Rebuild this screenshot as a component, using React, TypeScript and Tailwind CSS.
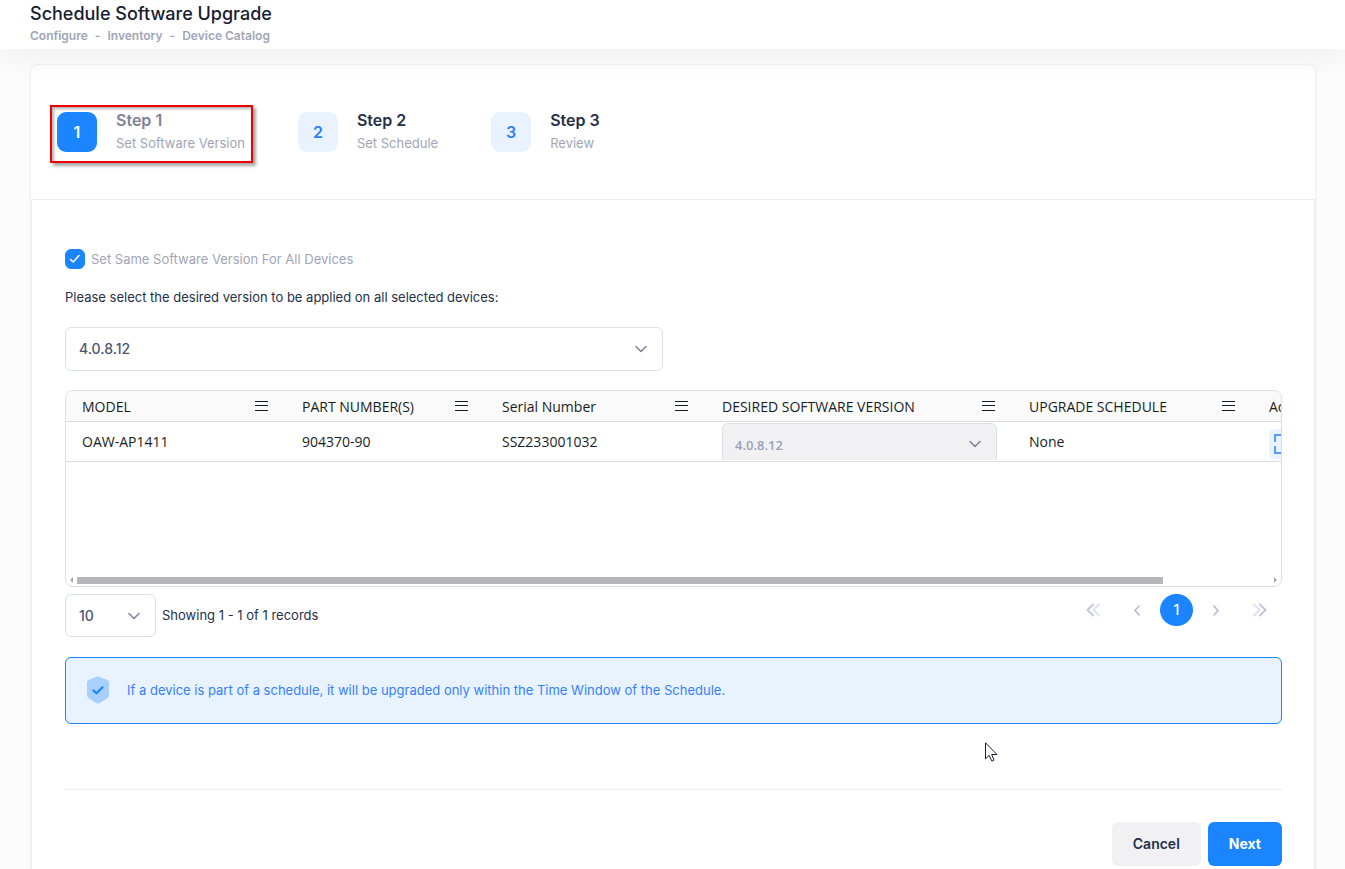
import { useState } from 'react';
import clsx from 'clsx';

const steps = [
    { number: 1, title: "Step 1", description: "Set Software Version" },
    { number: 2, title: "Step 2", description: "Set Schedule" },
    { number: 3, title: "Step 3", description: "Review" },
];

const columns = [
    { title: "MODEL", width: "w-[220px]" },
    { title: "PART NUMBER(S)", width: "w-[200px]" },
    { title: "Serial Number", width: "w-[220px]" },
    { title: "DESIRED SOFTWARE VERSION", width: "w-[307px]" },
    { title: "UPGRADE SCHEDULE", width: "w-[240px]" },
    { title: "Actions", width: "w-[116px]" },
];

const devices = [
    { model: "OAW-AP1411", part: "904370-90", serial: "SSZ233001032", version: "4.0.8.12", schedule: "None" },
];

const Chevron = ({ className }: { className?: string }) => (
    <svg viewBox="0 0 12 8" className={clsx("pointer-events-none h-2 w-3", className)} fill="none" stroke="#7e8299" strokeWidth="1.5" strokeLinecap="round" strokeLinejoin="round">
        <path d="M1 1.5l5 5 5-5" />
    </svg>
);

const MenuIcon = () => (
    <svg viewBox="0 0 13 10" className="h-2.5 w-[13px]" fill="none" stroke="#181d1f" strokeWidth="1" shapeRendering="crispEdges">
        <path d="M0 .5h13M0 4.5h13M0 9.5h13" />
    </svg>
);

const DoubleChevron = ({ flip }: { flip?: boolean }) => (
    <svg viewBox="0 0 14 14" className={clsx("h-3.5 w-3.5", flip && "rotate-180")} fill="none" stroke="#c1c6dc" strokeWidth="2" strokeLinejoin="round">
        <path d="M7.5 1L1.5 7l6 6" />
        <path d="M13.5 1l-6 6 6 6" opacity=".5" />
    </svg>
);

const SmallChevron = ({ flip }: { flip?: boolean }) => (
    <svg viewBox="0 0 6 11" className={clsx("h-[11px] w-1.5", flip && "rotate-180")} fill="none" stroke="#b5bad0" strokeWidth="1.6" strokeLinecap="round" strokeLinejoin="round">
        <path d="M5 1L1 5.500l4 4.500" />
    </svg>
);

const Stepper = () => (
    <ol className="flex h-[134px] gap-[53px] pt-[43px] pl-[26px]">
        {steps.map((step, index) => (
            <li key={step.number} className="relative flex h-12 items-center gap-[19px]">
                {index === 0 && (
                    <span className="absolute -top-[3px] -right-2 -bottom-[7px] -left-[7px] border-2 border-[#f00000] shadow-[3px_3px_3px_rgba(0,0,0,0.35),inset_2px_2px_3px_rgba(0,0,0,0.3)]" />
                )}
                <span className={clsx(
                    "flex h-10 w-10 items-center justify-center rounded-[9px] text-base font-semibold",
                    index === 0 ? "bg-[#1b84ff] text-white" : "bg-[#e9f3ff] text-[#2b7fff]"
                )}>
                    {step.number}
                </span>
                <div className="pb-0.5">
                    <h3 className={clsx("text-base leading-6 font-semibold", index === 0 ? "text-[#7e8299]" : "text-[#252f4a]")}>{step.title}</h3>
                    <p className="text-[13px] leading-[22px] text-[#a1a5b7]">{step.description}</p>
                </div>
            </li>
        ))}
    </ol>
);

const DeviceTable = () => (
    <div className="mt-[19px] flex h-[197px] flex-col overflow-hidden rounded-lg border border-[#dddddd]">
        <table className="w-[1303px] table-fixed border-collapse font-['Open_Sans','Noto_Sans',sans-serif] text-sm text-[#181d1f]">
            <thead>
                <tr className="h-[30px] border-b border-[#dddddd] bg-[#fafafa]">
                    {columns.map((column, index) => (
                        <th key={column.title} scope="col" className={clsx("p-0 pr-[18px] pl-4 text-left font-medium", column.width)}>
                            <div className="flex items-center justify-between whitespace-nowrap">
                                <span className="pt-0.5">{column.title}</span>
                                {index < 5 && <button type="button" aria-label="Column menu"><MenuIcon /></button>}
                            </div>
                        </th>
                    ))}
                </tr>
            </thead>
            <tbody>
                {devices.map((device) => (
                    <tr key={device.serial} className="h-10 border-b border-[#dddddd]">
                        <td className="p-0 pt-0.5 pl-4">{device.model}</td>
                        <td className="p-0 pt-0.5 pl-4">{device.part}</td>
                        <td className="p-0 pt-0.5 pl-4">{device.serial}</td>
                        <td className="p-0 px-4">
                            <div className="relative h-[38px] overflow-hidden pt-px">
                                <select disabled aria-label="Desired software version" className="h-11 w-full appearance-none rounded-md border border-[#dbdfe9] bg-[#f1f1f4] px-3 text-[13px] font-semibold text-[#99a1b7] opacity-100">
                                    <option>{device.version}</option>
                                </select>
                                <Chevron className="absolute top-[18px] right-4" />
                            </div>
                        </td>
                        <td className="p-0 pt-0.5 pl-4">{device.schedule}</td>
                        <td className="p-0 pt-0.5 pl-4">
                            <button type="button" aria-label="Expand" className="mt-1 flex h-[30px] w-[30px] items-center justify-center rounded-md bg-[#e9f3ff]">
                                <svg viewBox="0 0 20 20" className="h-5 w-5" fill="none" stroke="#2b7fff" strokeWidth="1.5">
                                    <path d="M8 1H1v7M12 1h7v7M8 19H1v-7M12 19h7v-7" />
                                </svg>
                            </button>
                        </td>
                    </tr>
                ))}
            </tbody>
        </table>
        <div className="mt-auto flex h-3 items-center gap-1 px-1">
            <svg viewBox="0 0 3 6" className="h-1.5 w-[3px]" fill="#a8a8b0"><path d="M3 0v6L0 3z" /></svg>
            <div className="flex-1">
                <div className="h-[7px] w-[91%] bg-[#b5b5ba]" />
            </div>
            <svg viewBox="0 0 3 6" className="h-1.5 w-[3px]" fill="#a8a8b0"><path d="M0 0v6l3-3z" /></svg>
        </div>
    </div>
);

const Pagination = () => (
    <div className="mt-[7px] flex items-start justify-between">
        <div className="flex items-center gap-1.5">
            <div className="relative">
                <select aria-label="Rows per page" className="h-[43px] w-[91px] appearance-none rounded-md border border-[#dbdfe9] bg-white px-[13px] text-sm font-medium text-[#4b5675]">
                    <option>10</option>
                    <option>25</option>
                </select>
                <Chevron className="absolute top-[18px] right-4" />
            </div>
            <span className="text-[13px] text-[#252f4a]">Showing 1 - 1 of 1 records</span>
        </div>
        <nav aria-label="Pages" className="flex items-center pr-[15px]">
            <button type="button" aria-label="First page"><DoubleChevron /></button>
            <button type="button" aria-label="Previous page" className="ml-[34px]"><SmallChevron /></button>
            <button type="button" className="mx-5 h-8 w-[33px] rounded-full bg-[#1b84ff] text-sm font-medium text-white">1</button>
            <button type="button" aria-label="Next page"><SmallChevron flip /></button>
            <button type="button" aria-label="Last page" className="ml-[34px]"><DoubleChevron flip /></button>
        </nav>
    </div>
);

const App = () => {
    const [sameVersion, setSameVersion] = useState(true);

    return (
        <div className="flex h-screen flex-col overflow-hidden bg-[#fcfcfc] font-['Inter',sans-serif]">
            <header className="relative z-10 flex h-[49px] shrink-0 flex-col justify-center bg-white px-[30px] pb-0.5 shadow-[0_10px_30px_rgba(0,0,0,0.05)]">
                <h1 className="text-lg leading-6 font-medium text-[#181c32]">Schedule Software Upgrade</h1>
                <nav className="flex gap-[7px] text-xs leading-5 font-semibold text-[#a1a5b7]">
                    <a href="#configure">Configure</a>
                    <span>-</span>
                    <a href="#inventory">Inventory</a>
                    <span>-</span>
                    <a href="#catalog">Device Catalog</a>
                </nav>
            </header>

            <main className="min-h-0 flex-1 overflow-hidden pt-[15px] pr-[29px] pl-[30px]">
                <section className="rounded-lg border border-[#f1f1f4] bg-white shadow-[0_0_3px_rgba(0,0,0,0.04)]">
                    <Stepper />
                    <div className="relative border border-[#eeeeee] pt-[49px] pr-8 pb-10 pl-[33px]">
                        <label className="flex items-center gap-1.5 text-[13px] leading-5 text-[#a1a5b7]">
                            <span className="relative h-5 w-5">
                                <input
                                    type="checkbox"
                                    checked={sameVersion}
                                    onChange={(e) => setSameVersion(e.target.checked)}
                                    className="block h-5 w-5 appearance-none rounded-[6px] border border-[#dbdfe9] checked:border-[#1b84ff] checked:bg-[#1b84ff]"
                                />
                                <svg viewBox="0 0 20 20" className="pointer-events-none absolute inset-0" fill="none" stroke="white" strokeWidth="1.5" strokeLinecap="round" strokeLinejoin="round">
                                    <path d="M5.500 10.500l2.700 2.500L14 6.500" />
                                </svg>
                            </span>
                            Set Same Software Version For All Devices
                        </label>

                        <label htmlFor="version" className="mt-[18px] block text-[13px] leading-5 text-[#252f4a]">
                            Please select the desired version to be applied on all selected devices:
                        </label>
                        <div className="mt-5 grid grid-cols-2 gap-[22px]">
                            <div className="relative">
                                <select id="version" className="block h-11 w-full appearance-none rounded-md border border-[#dbdfe9] bg-white px-[13px] text-sm font-medium text-[#4b5675]">
                                    <option>4.0.8.12</option>
                                </select>
                                <Chevron className="absolute top-[18px] right-4" />
                            </div>
                        </div>

                        <DeviceTable />
                        <Pagination />

                        <div className="mt-5 flex h-[67px] items-center gap-[17px] rounded-md border border-[#1b84ff] bg-[#e9f3ff] px-5 text-[13px] text-[#3580ff]">
                            <svg viewBox="0 0 24 28" className="mb-0.5 h-7 w-6">
                                <path d="M10.500.8q1.500-.7 3 0l7.500 3q2 .8 2 2.800v12.400q0 2-1.800 3.200l-7.500 4.800q-1.700 1-3.400 0l-7.500-4.800Q1 21 1 19V6.600q0-2 2-2.800z" fill="#a8d0ff" />
                                <path d="M7.500 14.500l3 2.800 6-6" fill="none" stroke="#1b84ff" strokeWidth="2.200" strokeLinecap="round" strokeLinejoin="round" />
                            </svg>
                            If a device is part of a schedule, it will be upgraded only within the Time Window of the Schedule.
                        </div>

                        {/* mouse pointer */}
                        <svg viewBox="0 0 13 20" className="absolute top-[542px] left-[953px] h-5 w-[13px]" fill="white" stroke="#181c32" strokeWidth="1">
                            <path d="M.5.8v16l3.700-3.500 2.500 5.600q1.200.5 2.300-.8L6.700 12.500h5.200z" />
                        </svg>

                        <div className="mt-[65px] flex justify-end gap-[7px] border-t border-[#eeeeee] pt-8">
                            <button type="button" className="h-11 rounded-md bg-[#f1f1f4] px-[21px] text-sm font-semibold text-[#252f4a]">Cancel</button>
                            <button type="button" className="h-11 rounded-md bg-[#1b84ff] px-[21px] text-sm font-bold text-white">Next</button>
                        </div>
                    </div>
                </section>
            </main>
        </div>
    );
};

export default App;
